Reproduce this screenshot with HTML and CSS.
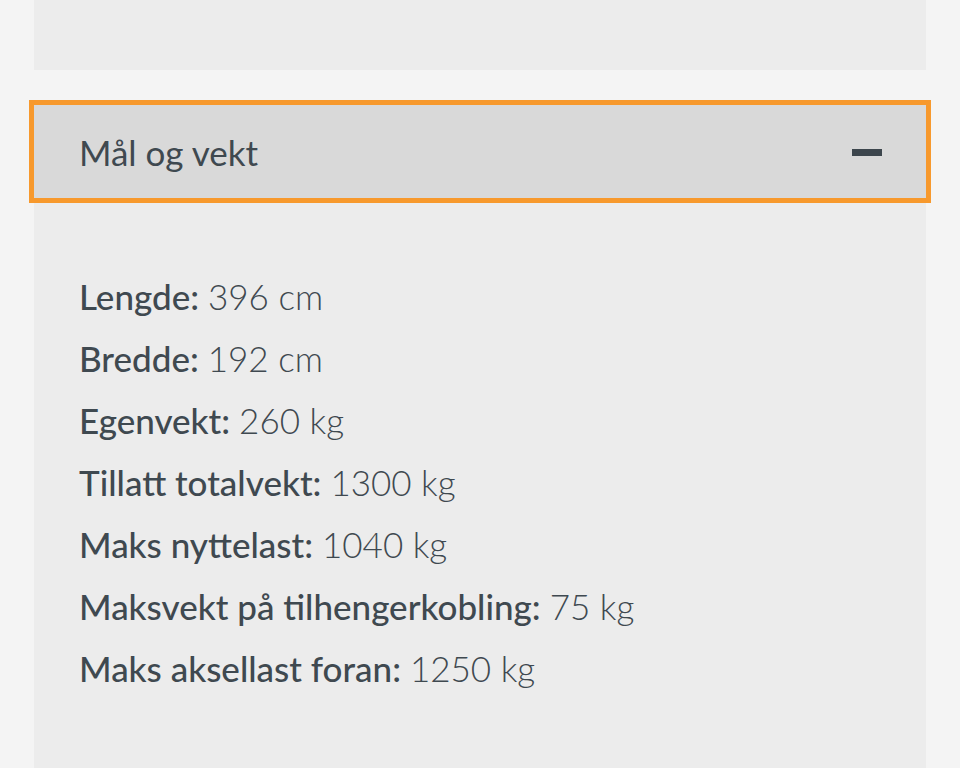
FILE: index.html
```html
<!DOCTYPE html>
<html lang="no">
<head>
<meta charset="utf-8">
<title>Mål og vekt</title>
<link rel="stylesheet" href="styles.css">
</head>
<body>
<div class="page">
  <div class="panel-top"></div>
  <section class="accordion">
    <div class="acc-header">
      <span class="acc-title">Mål og vekt</span>
      <span class="minus" aria-hidden="true"></span>
    </div>
    <div class="acc-body">
      <ul class="specs">
        <li><span class="label">Lengde:</span> <span class="value">396 cm</span></li>
        <li><span class="label">Bredde:</span> <span class="value">192 cm</span></li>
        <li><span class="label">Egenvekt:</span> <span class="value">260 kg</span></li>
        <li><span class="label">Tillatt totalvekt:</span> <span class="value">1300 kg</span></li>
        <li><span class="label">Maks nyttelast:</span> <span class="value">1040 kg</span></li>
        <li><span class="label">Maksvekt på tilhengerkobling:</span> <span class="value">75 kg</span></li>
        <li><span class="label">Maks aksellast foran:</span> <span class="value">1250 kg</span></li>
      </ul>
    </div>
  </section>
</div>
</body>
</html>
```
FILE: styles.css
```css
html, body {
  margin: 0;
  padding: 0;
  background: #f4f4f4;
}
body {
  font-family: Lato, "Open Sans", sans-serif;
  color: #3f4950;
}
.page {
  padding: 0 34px;
}
.panel-top {
  height: 70px;
  background: #ececec;
}
.accordion {
  margin-top: 35px;
}
.acc-header {
  height: 93px;
  background: #d9d9d9;
  outline: 5px solid #f7992d;
  display: flex;
  align-items: center;
  justify-content: space-between;
  padding: 0 44px 0 45px;
}
.acc-title {
  font-size: 35px;
  font-weight: 400;
}
.minus {
  display: block;
  width: 30px;
  height: 7px;
  background: #3d464d;
  margin-top: 2px;
}
.acc-body {
  background: #ececec;
  padding: 67px 45px 69px;
}
.specs {
  list-style: none;
  margin: 0;
  padding: 0;
  font-size: 35px;
  line-height: 62px;
}
.label {
  font-weight: 500;
}
.value {
  font-weight: 300;
}
```
